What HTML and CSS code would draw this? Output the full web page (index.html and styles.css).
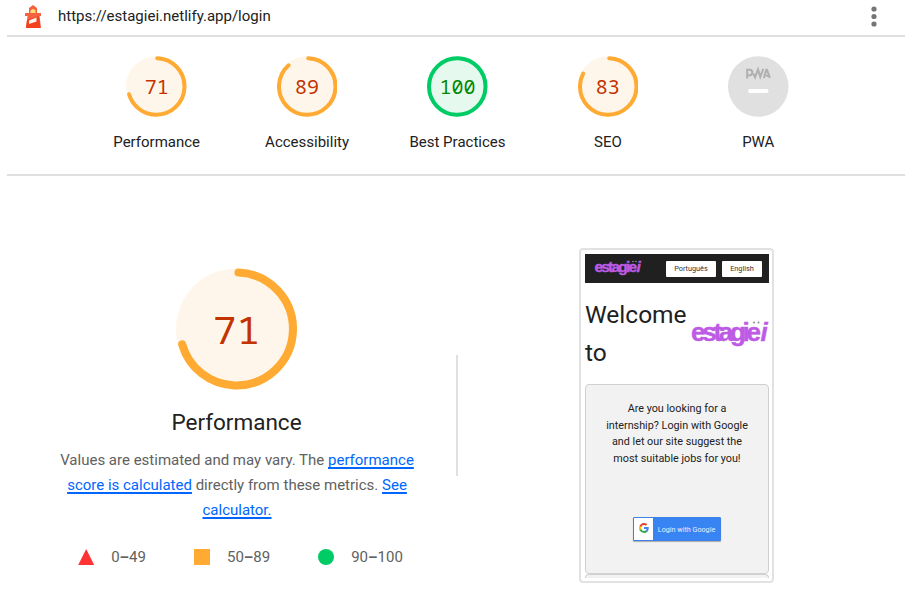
FILE: index.html
```
<!DOCTYPE html>
<html lang="en">
<head>
<meta charset="utf-8">
<title>Lighthouse report</title>
<link rel="stylesheet" href="styles.css">
</head>
<body>
<main class="report">
  <header class="topbar">
    <svg class="logo" viewBox="0 0 18 24">
      <path fill="#f4623f" d="M5 3 9 0l4 3v5h4v3h-1.500l1.500 12H2l1.500-12H1V8h4z"/>
      <path fill="#f3401f" d="M3 15 15 11l1.500 12H2z"/>
      <path fill="#ffdf70" d="M6.500 5.500Q9 2.500 11.500 5.500V8h-5z"/>
      <path fill="#fff4ef" d="m5 15.500 7.500-3v4L5 19z"/>
    </svg>
    <span class="url">https://estagiei.netlify.app/login</span>
    <svg class="menu" viewBox="0 0 6 22"><circle cx="3" cy="3" r="2.600"/><circle cx="3" cy="10.500" r="2.600"/><circle cx="3" cy="18" r="2.600"/></svg>
  </header>

  <nav class="scores">
    <a class="score average">
      <span class="gauge"><svg viewBox="0 0 120 120"><circle class="base" cx="60" cy="60" r="60"/><circle class="arc" cx="60" cy="60" r="56" stroke-dasharray="246 352"/></svg><b>71</b></span>
      <span class="label">Performance</span>
    </a>
    <a class="score average">
      <span class="gauge"><svg viewBox="0 0 120 120"><circle class="base" cx="60" cy="60" r="60"/><circle class="arc" cx="60" cy="60" r="56" stroke-dasharray="309 352"/></svg><b>89</b></span>
      <span class="label">Accessibility</span>
    </a>
    <a class="score pass">
      <span class="gauge"><svg viewBox="0 0 120 120"><circle class="base" cx="60" cy="60" r="60"/><circle class="arc" cx="60" cy="60" r="56"/></svg><b>100</b></span>
      <span class="label">Best Practices</span>
    </a>
    <a class="score average">
      <span class="gauge"><svg viewBox="0 0 120 120"><circle class="base" cx="60" cy="60" r="60"/><circle class="arc" cx="60" cy="60" r="56" stroke-dasharray="288 352"/></svg><b>83</b></span>
      <span class="label">SEO</span>
    </a>
    <a class="score">
      <span class="gauge"><svg viewBox="0 0 60 60"><circle cx="30" cy="30" r="30" fill="#e0e0e0"/><g fill="none" stroke="#b0b0b0" stroke-width="2"><path d="M19 22v-8.500h2.500a2.300 2.300 0 0 1 0 5.300H19"/><path d="m25 17 1.800 4 3-8 2.200 7.500 3-8"/><path d="m35.500 21.500 2.500-8h.7l2.800 8M37.500 19.300h3"/></g><rect x="20" y="32.500" width="20" height="4" rx="1.500" fill="#fff"/></svg></span>
      <span class="label">PWA</span>
    </a>
  </nav>

  <section class="details">
    <div class="summary">
      <div class="gauge large average"><svg viewBox="0 0 120 120"><circle class="base" cx="60" cy="60" r="60"/><circle class="arc" cx="60" cy="60" r="56" stroke-dasharray="246 352"/></svg><b>71</b></div>
      <h1>Performance</h1>
      <p>Values are estimated and may vary. The <a>performance<br>score is calculated</a> directly from these metrics. <a>See<br>calculator.</a></p>
      <div class="legend">
        <span><i class="mark triangle"></i>0<em>–</em>49</span>
        <span><i class="mark square"></i>50<em>–</em>89</span>
        <span><i class="mark circle"></i>90<em>–</em>100</span>
      </div>
    </div>
    <div class="divider"></div>
    <div class="preview">
      <div class="frame">
        <div class="site-bar">
          <svg class="site-logo" viewBox="0 0 50 20"><text class="brand" x="1.500" y="13" font-size="15.500" textLength="42.500" lengthAdjust="spacing">estagie</text><text class="brand slant" x="43.500" y="13" font-size="15.500">i</text><circle cx="40" cy="2.500" r=".7" fill="#aaa"/><circle cx="43" cy="2.500" r=".7" fill="#aaa"/></svg>
          <span class="lang">Português</span>
          <span class="lang english">English</span>
        </div>
        <div class="welcome">
          <span>Welcome<br>to</span>
          <svg class="brand-logo" viewBox="0 0 79 32"><text class="brand" x="0" y="26.500" font-size="26" textLength="70" lengthAdjust="spacing">estagie</text><text class="brand slant" x="69.500" y="26.500" font-size="26">i</text><circle cx="63" cy="8.500" r="1" fill="#888"/><circle cx="67.500" cy="8.500" r="1" fill="#888"/></svg>
        </div>
        <div class="card">
          <p>Are you looking for a<br>internship? Login with Google<br>and let our site suggest the<br>most suitable jobs for you!</p>
          <div class="login">
            <span class="g"><svg viewBox="0 0 18 18"><path fill="#4285f4" d="M17.600 9.200c0-.6-.1-1.200-.2-1.800H9v3.500h4.800a4.100 4.100 0 0 1-1.800 2.700v2.300h2.900c1.700-1.600 2.700-3.900 2.700-6.700z"/><path fill="#34a853" d="M9 18c2.400 0 4.500-.8 6-2.200l-3-2.200c-.8.5-1.800.9-3 .9a5.300 5.300 0 0 1-5-3.700H1v2.300A9 9 0 0 0 9 18z"/><path fill="#fbbc05" d="M4 10.700a5.400 5.400 0 0 1 0-3.400V5H1a9 9 0 0 0 0 8z"/><path fill="#ea4335" d="M9 3.600c1.300 0 2.500.5 3.400 1.300L15 2.300A9 9 0 0 0 1 5l3 2.300a5.300 5.300 0 0 1 5-3.700z"/></svg></span>
            <span class="login-text">Login with Google</span>
          </div>
        </div>
        <div class="card next"></div>
      </div>
    </div>
  </section>
</main>
</body>
</html>
```
FILE: styles.css
```
* { box-sizing: border-box; }
body { margin: 0; background: #fff; color: #212121; font-family: Roboto, "Liberation Sans", sans-serif; overflow: hidden; }
.report { margin-left: 7px; }
svg { display: block; }
.topbar { display: flex; align-items: center; height: 37px; padding: 0 28px 4px 17px; border-bottom: 2px solid #e0e0e0; }
.logo { width: 18px; height: 24px; margin-top: 2px; }
.url { margin-left: 16px; font-size: 15px; }
.menu { width: 6px; height: 22px; margin-left: auto; margin-top: 2px; fill: #757575; }
.scores { display: flex; height: 139px; padding: 19px 0 0 74.500px; border-bottom: 2px solid #e0e0e0; }
.score { width: 150.400px; display: flex; flex-direction: column; align-items: center; }
.gauge { position: relative; display: block; width: 60.500px; height: 61px; color: #c33300; }
.gauge svg { width: 100%; height: 100%; }
.gauge b { position: absolute; inset: 0; display: flex; align-items: center; justify-content: center; font: 400 20px "Noto Sans Mono", "DejaVu Sans Mono", monospace; }
.base { fill: #fff6eb; }
.arc { fill: none; stroke: #fa3; stroke-width: 8; stroke-linecap: round; transform: rotate(-88deg); transform-origin: center; }
.pass .base { fill: #e5f9ee; }
.pass .arc { stroke: #0c6; }
.pass .gauge { color: #080; }
.label { margin-top: 15px; font-size: 15px; line-height: 20px; }
.details { display: flex; }
.summary { width: 449px; padding-top: 92px; display: flex; flex-direction: column; align-items: center; }
.gauge.large { width: 121px; height: 122px; margin-left: 10px; }
.gauge.large b { padding-bottom: 2px; font-size: 39px; }
h1 { margin: 17px 0 0 10px; font-size: 22.500px; font-weight: 400; line-height: 31px; }
.summary p { margin: 10px 0 0 11px; font-size: 15px; line-height: 25px; color: #616161; text-align: center; white-space: nowrap; }
.summary a { color: #06f; text-decoration: underline; text-decoration-thickness: 2px; text-underline-offset: 2px; text-decoration-skip-ink: none; }
.legend { display: flex; gap: 48px; margin: 24px 0 0 18px; font-size: 15px; line-height: 20px; color: #616161; }
.legend span { display: flex; align-items: center; }
.legend em { font-style: normal; font-weight: 700; }
.mark { width: 16px; height: 16px; margin-right: 17px; }
.triangle { background: #f33; clip-path: polygon(50% 0, 100% 100%, 0 100%); }
.square { background: #fa3; }
.circle { background: #0c6; border-radius: 50%; }
.divider { width: 2px; height: 121px; margin-top: 179px; background: #e0e0e0; }
.preview { margin: 72px 0 0 121px; }
.frame { display: grid; grid-template: 29px 101px 190px 4px / minmax(0, 1fr); width: 195px; height: 335px; border: 2px solid #e2e2e2; border-radius: 4px; padding: 4px 3px 4px 4px; overflow: hidden; }
.site-bar { display: flex; align-items: center; padding-left: 8px; background: #202020; }
.site-logo { flex: none; width: 50px; height: 20px; margin-right: 23px; overflow: visible; }
.brand { font-family: "Liberation Sans", sans-serif; font-weight: 700; fill: #bd5be4; stroke: #bd5be4; stroke-width: .4; }
.slant { font-style: italic; }
.lang { flex: none; width: 50px; height: 16px; margin-right: 6px; border-radius: 1px; background: #fff; color: #333; font-size: 7.300px; line-height: 16px; text-align: center; }
.lang.english { width: 40px; margin-right: 0; }
.welcome { display: flex; padding-top: 13px; font-size: 24.500px; line-height: 38px; }
.brand-logo { flex: none; width: 79px; height: 32px; margin: 18px 0 0 4px; overflow: visible; }
.card { padding-top: 16px; border: 1px solid #d0d0d0; border-radius: 4px; background: #f2f2f2; text-align: center; }
.card p { margin: 0; font-size: 10.800px; line-height: 16.500px; white-space: nowrap; }
.login { display: flex; width: 88px; height: 24px; margin: 50px auto 0 47px; border: 1px solid #3c80e8; border-radius: 1px; background: #3984f3; box-shadow: 0 1px 1px #aaa; }
.g { width: 19px; background: #fff; padding: 5px; }
.g svg { width: 10px; height: 10px; }
.login-text { flex: 1; color: #e5efff; font-size: 7.200px; line-height: 23px; white-space: nowrap; }
.card.next { padding: 0; border-bottom: 0; border-radius: 4px 4px 0 0; }
```
